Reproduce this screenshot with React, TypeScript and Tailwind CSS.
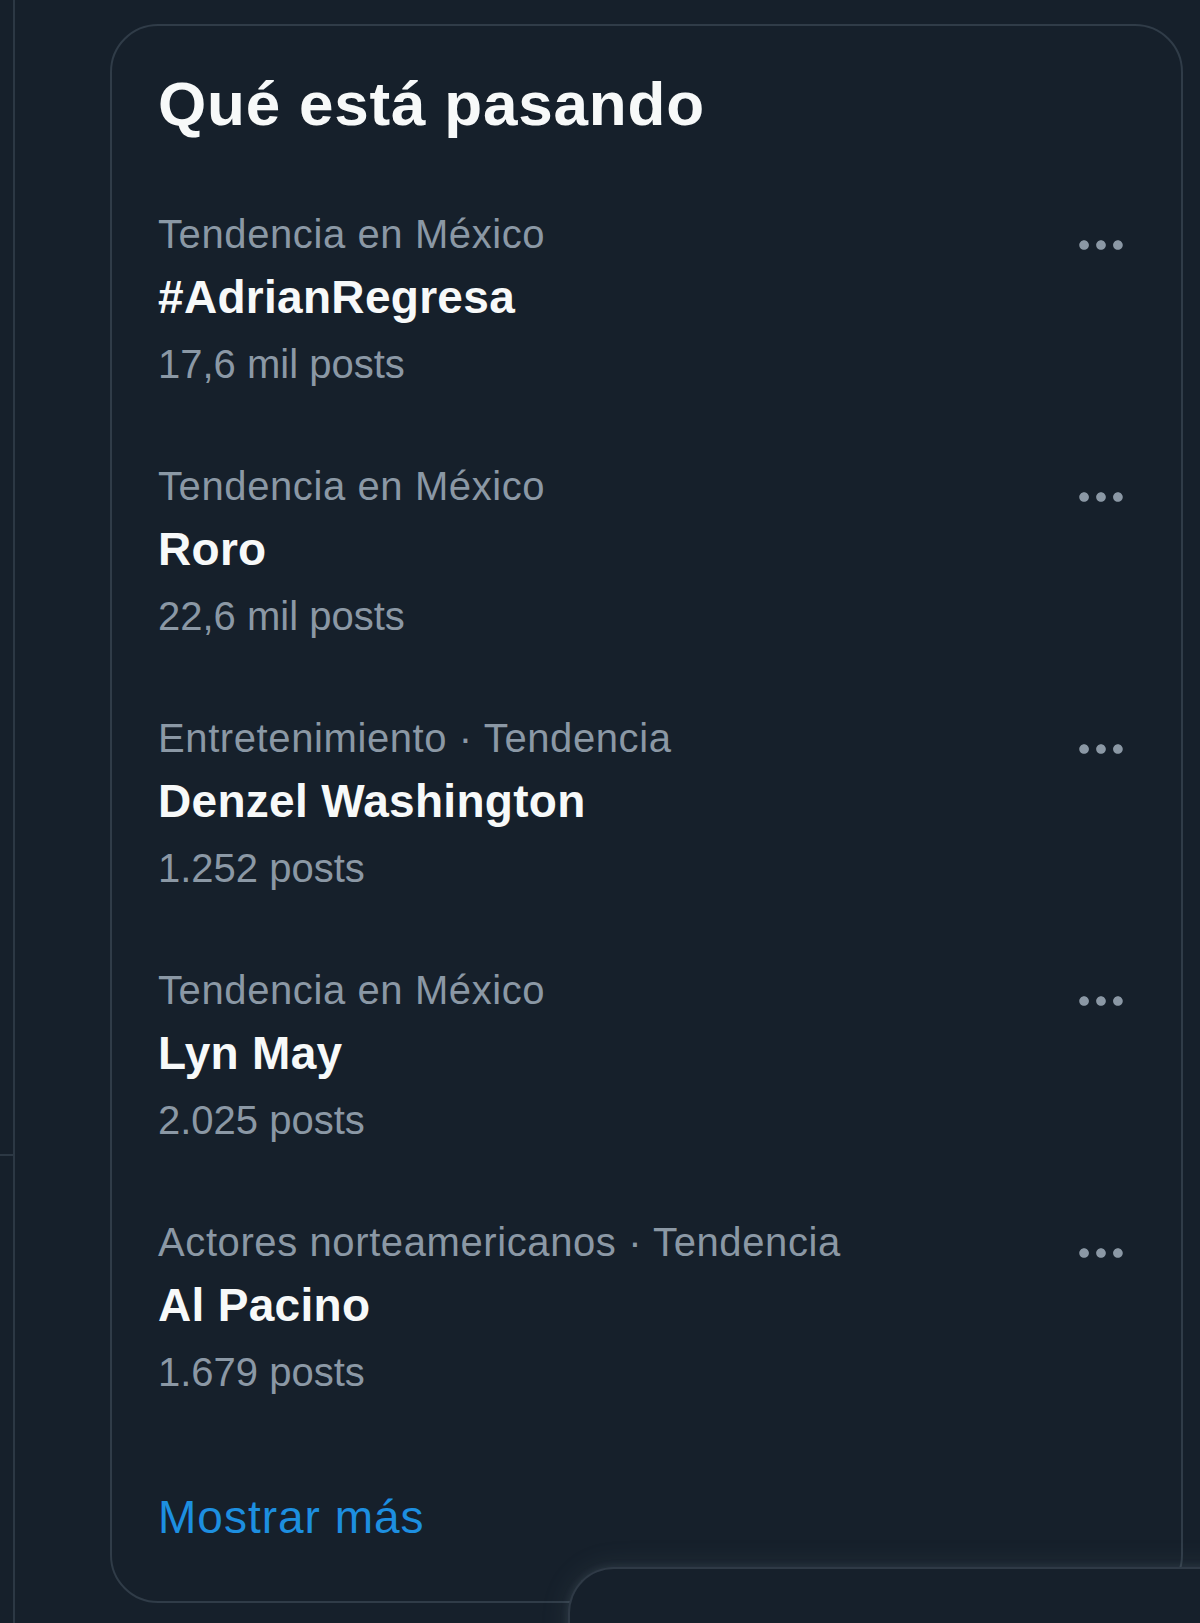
import React from "react";

const trends = [
  { cat: "Tendencia en México", name: "#AdrianRegresa", posts: "17,6 mil posts" },
  { cat: "Tendencia en México", name: "Roro", posts: "22,6 mil posts" },
  { cat: "Entretenimiento · Tendencia", name: "Denzel Washington", posts: "1.252 posts" },
  { cat: "Tendencia en México", name: "Lyn May", posts: "2.025 posts" },
  { cat: "Actores norteamericanos · Tendencia", name: "Al Pacino", posts: "1.679 posts" },
];

function Dots() {
  return (
    <svg viewBox="0 0 24 24" className="w-[58px] h-[58px]" fill="#8b98a5" aria-hidden="true">
      <path d="M3 12c0-1.1.9-2 2-2s2 .9 2 2-.9 2-2 2-2-.9-2-2zm9 2c1.1 0 2-.9 2-2s-.9-2-2-2-2 .9-2 2 .9 2 2 2zm7 0c1.1 0 2-.9 2-2s-.9-2-2-2-2 .9-2 2 .9 2 2 2z" />
    </svg>
  );
}

export default function App() {
  return (
    <div
      className="relative w-[1200px] h-[1623px] overflow-hidden bg-[#16202b] flex"
      style={{ fontFamily: '"Liberation Sans", Arial, sans-serif' }}
    >
      {/* left column edge */}
      <div className="w-[15px] shrink-0 border-r-2 border-[#2c3844] flex flex-col">
        <div className="h-[1156px] border-b-2 border-[#2c3844]" />
      </div>

      {/* trends card */}
      <div className="ml-[95px] mt-[24px] w-[1073px] self-start border-2 border-[#303c48] rounded-[48px] flex flex-col">
        <div className="pl-[46px] pt-[41px] pb-[32px]">
          <h2 className="text-[62px] leading-[74px] font-bold text-[#f7f9f9] tracking-[0.8px]">
            Qué está pasando
          </h2>
        </div>

        {trends.map((t) => (
          <div key={t.name} className="relative pl-[46px] pr-[60px] pt-[37px] pb-[36px] flex flex-col">
            <div className="text-[40px] leading-[49px] text-[#8b98a5] tracking-[0.6px]">{t.cat}</div>
            <div className="mt-[7px] text-[46px] leading-[62px] font-bold text-[#f7f9f9] tracking-[0.3px]">{t.name}</div>
            <div className="mt-[12px] text-[40px] leading-[49px] text-[#8b98a5]">{t.posts}</div>
            <div className="absolute right-[51px] top-[43px]">
              <Dots />
            </div>
          </div>
        ))}

        <div className="pl-[46px] pt-[53px] pb-[53px]">
          <span className="text-[46px] leading-[62px] text-[#1d8fe0] tracking-[1px]">Mostrar más</span>
        </div>
      </div>

      {/* messages drawer overlay */}
      <div className="absolute left-[568px] top-[1567px] w-[700px] h-[200px] rounded-tl-[46px] border-t-2 border-l-2 border-[#2f3a46] bg-[#16202b] shadow-[0_0_30px_rgba(136,153,166,0.12),0_0_6px_2px_rgba(136,153,166,0.1)]" />
    </div>
  );
}
